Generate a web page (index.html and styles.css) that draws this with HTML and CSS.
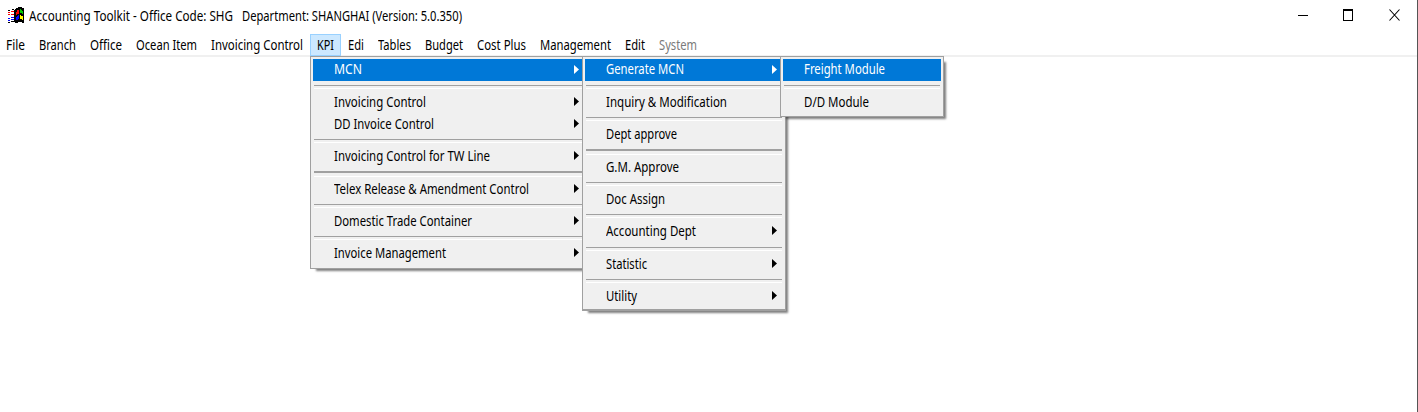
FILE: index.html
```html
<!DOCTYPE html>
<html lang="en">
<head>
<meta charset="utf-8">
<title>Accounting Toolkit</title>
<link rel="stylesheet" href="styles.css">
</head>
<body>
<div class="window">
  <header class="titlebar">
    <svg class="logo" width="16" height="17" viewBox="0 0 16 17" shape-rendering="crispEdges">
      <path d="M8 1h2V0h4v1h2v15h-2v-1h-4v1H7V2h1z" fill="#000"/>
      <path d="M9 3h2v4H9zM8 5h1v3H8z" fill="#f00"/>
      <path d="M12 2h1v1h1v1h1v3h-1V6h-2z" fill="#0c0"/>
      <path d="M9 9h1V8h1v4h-1v1H8v-3h1z" fill="#00f"/>
      <path d="M12 8h1v1h2v4h-1v-1h-2z" fill="#ff0"/>
      <path d="M4 2h2v1H4zM0 3h2v1H0zM3 14h3v1H3zM0 15h2v1H0zM6 3h1v12H6z" fill="#000"/>
      <path d="M3 4h3v1H3zM0 5h2v1H0zM3 7h3v1H3zM0 7h2v1H0z" fill="#f00"/>
      <path d="M3 10h3v1H3zM0 11h2v1H0zM3 12h3v1H3zM0 13h2v1H0z" fill="#00f"/>
    </svg>
    <span class="label" data-w="204">Accounting Toolkit - Office Code: SHG</span>
    <span class="label dept" data-w="220">Department: SHANGHAI (Version: 5.0.350)</span>
    <svg class="controls" width="102" height="14" viewBox="0 0 102 14">
      <path d="M0 6h10v1H0z" fill="#000"/>
      <path d="M45 0h10v12H45zM46 2v9h8V2z" fill="#000" fill-rule="evenodd"/>
      <path d="M91.500 .5l10 11M101.500 .5l-10 11" stroke="#000" stroke-width="1.1"/>
    </svg>
  </header>
  <nav class="menubar">
    <span class="top"><span class="label" data-w="19">File</span></span>
    <span class="top"><span class="label" data-w="37">Branch</span></span>
    <span class="top"><span class="label" data-w="32">Office</span></span>
    <span class="top"><span class="label" data-w="61">Ocean Item</span></span>
    <span class="top"><span class="label" data-w="92">Invoicing Control</span></span>
    <span class="top open"><span class="label" data-w="17">KPI</span></span>
    <span class="top"><span class="label" data-w="16">Edi</span></span>
    <span class="top"><span class="label" data-w="33">Tables</span></span>
    <span class="top"><span class="label" data-w="38">Budget</span></span>
    <span class="top"><span class="label" data-w="49">Cost Plus</span></span>
    <span class="top"><span class="label" data-w="71">Management</span></span>
    <span class="top"><span class="label" data-w="20">Edit</span></span>
    <span class="top disabled"><span class="label" data-w="38">System</span></span>
  </nav>

  <div class="menu kpi">
    <div class="item sub active"><span class="label" data-w="28">MCN</span></div>
    <div class="sep"></div>
    <div class="item sub"><span class="label" data-w="92">Invoicing Control</span></div>
    <div class="item sub"><span class="label" data-w="100">DD Invoice Control</span></div>
    <div class="sep"></div>
    <div class="item sub"><span class="label" data-w="156">Invoicing Control for TW Line</span></div>
    <div class="sep thick"></div>
    <div class="item sub"><span class="label" data-w="195">Telex Release &amp; Amendment Control</span></div>
    <div class="sep"></div>
    <div class="item sub"><span class="label" data-w="138">Domestic Trade Container</span></div>
    <div class="sep"></div>
    <div class="item sub"><span class="label" data-w="112">Invoice Management</span></div>
  </div>

  <div class="menu mcn">
    <div class="item sub active"><span class="label" data-w="78">Generate MCN</span></div>
    <div class="sep"></div>
    <div class="item"><span class="label" data-w="121">Inquiry &amp; Modification</span></div>
    <div class="sep"></div>
    <div class="item"><span class="label" data-w="71">Dept approve</span></div>
    <div class="sep thick"></div>
    <div class="item"><span class="label" data-w="73">G.M. Approve</span></div>
    <div class="sep"></div>
    <div class="item"><span class="label" data-w="59">Doc Assign</span></div>
    <div class="sep"></div>
    <div class="item sub"><span class="label" data-w="90">Accounting Dept</span></div>
    <div class="sep tall"></div>
    <div class="item sub"><span class="label" data-w="41">Statistic</span></div>
    <div class="sep"></div>
    <div class="item sub"><span class="label" data-w="31">Utility</span></div>
  </div>

  <div class="menu generate">
    <div class="item active"><span class="label" data-w="81">Freight Module</span></div>
    <div class="sep"></div>
    <div class="item"><span class="label" data-w="65">D/D Module</span></div>
  </div>
</div>
<script src="labels.js"></script>
</body>
</html>
```
FILE: styles.css
```css
* { box-sizing: border-box; }
body {
  margin: 0;
  background: #fff;
  color: #000;
  font: 14px/20px "Noto Sans", "Open Sans", sans-serif;
}
.window {
  position: relative;
  height: 412px;
  overflow: hidden;
  border-right: 1px solid #555;
}
.label {
  display: block;
  flex: none;
  white-space: nowrap;
  transform-origin: 0 50%;
}
.titlebar {
  display: flex;
  align-items: center;
  height: 34px;
  padding: 0 17px 3px 8px;
}
.logo { margin-right: 5px; }
.dept { margin-left: 9px; }
.controls { margin-left: auto; }
.menubar {
  display: flex;
  height: 23px;
  border-bottom: 2px solid #f0f0f0;
}
.top {
  height: 22px;
  padding: 1px 7px 0;
}
.top:first-child { padding-left: 6px; }
.top.open {
  padding: 0 6px;
  border: 1px solid #99d1ff;
  background: #cce8ff;
}
.disabled { color: #7a7a7a; }
.menu {
  position: absolute;
  top: 56px;
  padding: 2px 2px 0;
  border: 1px solid #a0a0a0;
  background: #f0f0f0;
  box-shadow: 4px 4px 2px -2px rgba(0, 0, 0, 0.5);
}
.kpi { left: 310px; width: 277px; height: 213px; }
.mcn { left: 582px; width: 204px; height: 255px; border-bottom-width: 2px; }
.generate { left: 780px; width: 164px; height: 61px; }
.item {
  position: relative;
  display: flex;
  align-items: center;
  height: 22px;
  padding-left: 21px;
}
.active {
  padding-bottom: 2px;
  background: #0078d7;
  color: #fff;
}
.sub::after {
  content: "";
  position: absolute;
  top: 6px;
  right: 5px;
  width: 5px;
  height: 9px;
  background: currentColor;
  clip-path: polygon(0 0, 100% 50%, 0 100%);
}
.mcn .sub::after { right: 6px; }
.sep {
  height: 10px;
  padding: 4px 1px 0;
}
.sep::before {
  content: "";
  display: block;
  height: 2px;
  border-top: 1px solid #a0a0a0;
  border-bottom: 1px solid #fff;
}
.thick, .tall { height: 11px; }
.tall { padding-top: 5px; }
.thick::before { height: 3px; border-top-width: 2px; }
```
FILE: labels.js
```js
// Condense each label horizontally to its nominal width.
document.querySelectorAll(".label").forEach(function (el) {
  var range = document.createRange();
  range.selectNodeContents(el);
  var natural = range.getBoundingClientRect().width;
  var width = Number(el.dataset.w);
  el.style.width = width + "px";
  el.style.transform = "scaleX(" + width / natural + ")";
});
```
